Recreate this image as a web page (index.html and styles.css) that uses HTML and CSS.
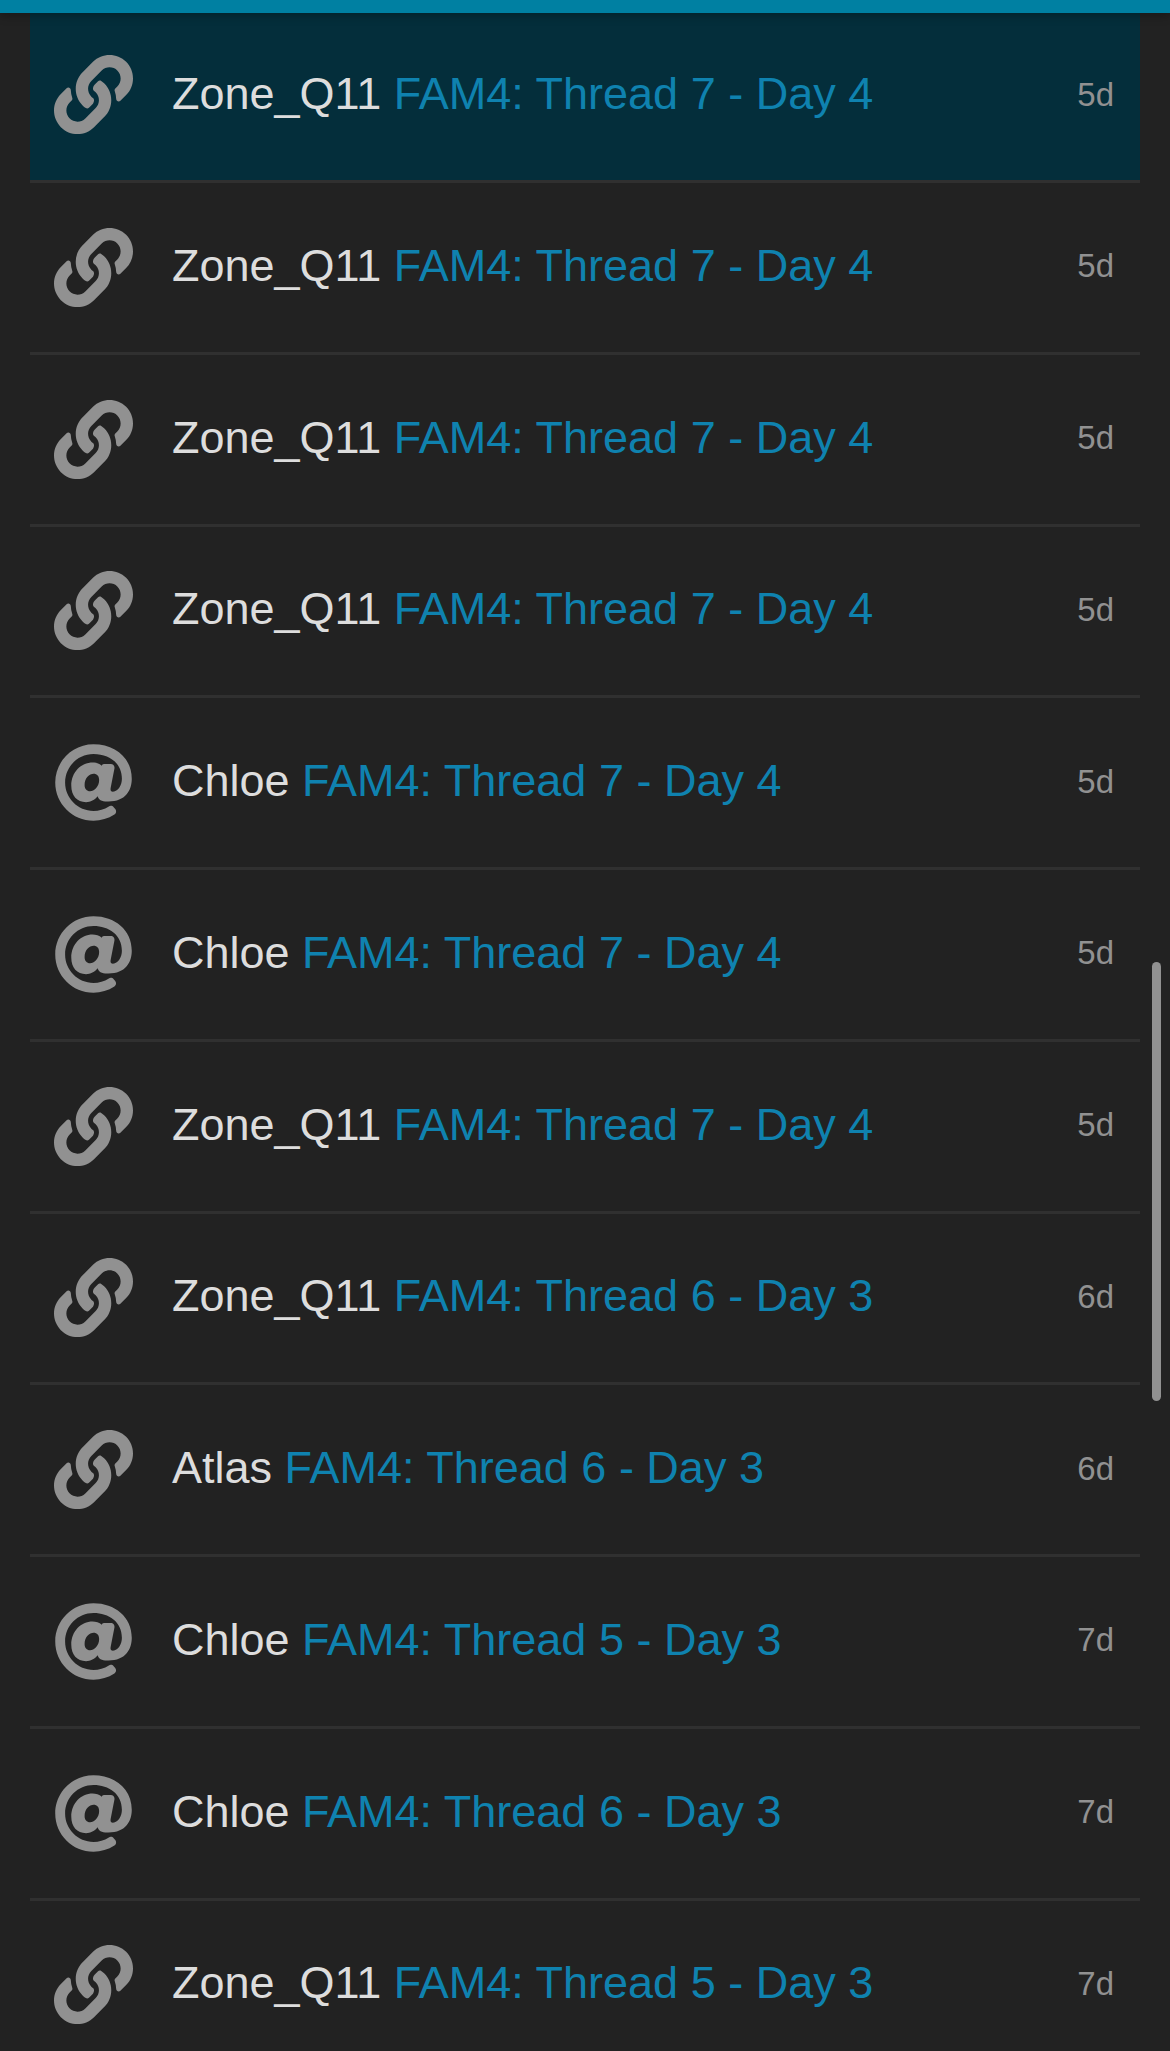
FILE: index.html
```html
<!DOCTYPE html>
<html lang="en">
<head>
<meta charset="utf-8">
<title>Notifications</title>
<link rel="stylesheet" href="styles.css">
</head>
<body>
<svg class="sprite" aria-hidden="true">
<symbol id="link" viewBox="0 0 512 512"><path d="M326.612 185.391c59.747 59.809 58.927 155.698.36 214.59-.11.12-.24.25-.36.37l-67.2 67.2c-59.27 59.27-155.699 59.262-214.96 0-59.27-59.26-59.27-155.7 0-214.96l37.106-37.106c9.84-9.84 26.786-3.3 27.294 10.606.648 17.722 3.826 35.527 9.69 52.721 1.986 5.822.567 12.262-3.783 16.612l-13.087 13.087c-28.026 28.026-28.905 73.66-1.155 101.96 28.024 28.579 74.086 28.749 102.325.51l67.2-67.19c28.191-28.191 28.073-73.757 0-101.83-3.701-3.694-7.429-6.564-10.341-8.569a16.037 16.037 0 0 1-6.947-12.606c-.396-10.567 3.348-21.456 11.698-29.806l21.054-21.055c5.521-5.521 14.182-6.199 20.584-1.731a152.482 152.482 0 0 1 20.522 17.197zM467.547 44.449c-59.261-59.262-155.69-59.27-214.96 0l-67.2 67.2c-.12.12-.25.25-.36.37-58.566 58.892-59.387 154.781.36 214.59a152.454 152.454 0 0 0 20.521 17.196c6.402 4.468 15.064 3.789 20.584-1.731l21.054-21.055c8.35-8.35 12.094-19.239 11.698-29.806a16.037 16.037 0 0 0-6.947-12.606c-2.912-2.005-6.64-4.875-10.341-8.569-28.073-28.073-28.191-73.639 0-101.83l67.2-67.19c28.239-28.239 74.3-28.069 102.325.51 27.75 28.3 26.872 73.934-1.155 101.96l-13.087 13.087c-4.35 4.35-5.769 10.79-3.783 16.612 5.864 17.194 9.042 34.999 9.69 52.721.509 13.906 17.454 20.446 27.294 10.606l37.106-37.106c59.271-59.259 59.271-155.699.001-214.959z"/></symbol>
<symbol id="at" viewBox="0 0 512 512"><path d="M256 8C118.941 8 8 118.919 8 256c0 137.059 110.919 248 248 248 48.154 0 95.342-14.14 135.408-40.223 12.005-7.815 14.625-24.288 5.552-35.372l-10.177-12.433c-7.671-9.371-21.179-11.667-31.373-5.129C325.92 429.757 291.314 440 256 440c-101.458 0-184-82.542-184-184S154.542 72 256 72c100.139 0 184 57.619 184 160 0 38.786-21.093 79.742-58.17 83.693-17.349-.454-16.91-12.857-13.476-30.024l23.433-121.11C394.653 149.75 383.308 136 368.225 136h-44.981a13.518 13.518 0 0 0-13.432 11.993l-.01.092c-14.697-17.901-40.448-21.775-59.971-21.775-74.58 0-137.831 62.234-137.831 151.46 0 65.303 36.785 105.87 96 105.87 26.984 0 57.369-15.637 74.991-38.333 9.522 34.104 40.613 34.104 70.706 34.104C462.609 379.41 504 307.798 504 232 504 95.653 394.023 8 256 8zm-21.68 304.43c-22.249 0-36.07-15.623-36.07-40.771 0-44.993 30.779-72.729 58.63-72.729 22.292 0 35.601 15.241 35.601 40.77 0 45.061-33.875 72.73-58.161 72.73z"/></symbol>
</svg>
<header class="topbar"></header>
<ul class="list">
<li class="item unread"><svg class="icon"><use href="#link"/></svg><p class="text">Zone_Q11 <a class="topic">FAM4: Thread 7 - Day 4</a></p><time class="age">5d</time></li>
<li class="item"><svg class="icon"><use href="#link"/></svg><p class="text">Zone_Q11 <a class="topic">FAM4: Thread 7 - Day 4</a></p><time class="age">5d</time></li>
<li class="item"><svg class="icon"><use href="#link"/></svg><p class="text">Zone_Q11 <a class="topic">FAM4: Thread 7 - Day 4</a></p><time class="age">5d</time></li>
<li class="item"><svg class="icon"><use href="#link"/></svg><p class="text">Zone_Q11 <a class="topic">FAM4: Thread 7 - Day 4</a></p><time class="age">5d</time></li>
<li class="item"><svg class="icon"><use href="#at"/></svg><p class="text">Chloe <a class="topic">FAM4: Thread 7 - Day 4</a></p><time class="age">5d</time></li>
<li class="item"><svg class="icon"><use href="#at"/></svg><p class="text">Chloe <a class="topic">FAM4: Thread 7 - Day 4</a></p><time class="age">5d</time></li>
<li class="item"><svg class="icon"><use href="#link"/></svg><p class="text">Zone_Q11 <a class="topic">FAM4: Thread 7 - Day 4</a></p><time class="age">5d</time></li>
<li class="item"><svg class="icon"><use href="#link"/></svg><p class="text">Zone_Q11 <a class="topic">FAM4: Thread 6 - Day 3</a></p><time class="age">6d</time></li>
<li class="item"><svg class="icon"><use href="#link"/></svg><p class="text">Atlas <a class="topic">FAM4: Thread 6 - Day 3</a></p><time class="age">6d</time></li>
<li class="item"><svg class="icon"><use href="#at"/></svg><p class="text">Chloe <a class="topic">FAM4: Thread 5 - Day 3</a></p><time class="age">7d</time></li>
<li class="item"><svg class="icon"><use href="#at"/></svg><p class="text">Chloe <a class="topic">FAM4: Thread 6 - Day 3</a></p><time class="age">7d</time></li>
<li class="item"><svg class="icon"><use href="#link"/></svg><p class="text">Zone_Q11 <a class="topic">FAM4: Thread 5 - Day 3</a></p><time class="age">7d</time></li>
</ul>
<div class="scroll-thumb"></div>
</body>
</html>
```
FILE: styles.css
```css
* { box-sizing: border-box; }

body {
  margin: 0;
  height: 2051px;
  overflow: hidden;
  background: #222;
  color: #ddd;
  font-family: "Liberation Sans", Arial, sans-serif;
}

.sprite { display: none; }

.topbar {
  position: relative;
  height: 13px;
  background: #0080a2;
  box-shadow: 0 3px 10px rgba(0, 0, 0, .28);
}

.list {
  margin: 0;
  padding: 0 30px;
  list-style: none;
}

.item {
  display: flex;
  align-items: center;
  height: 171.75px;
  padding: 0 26px 0 24px;
  border-bottom: 3px solid #303030;
}

.item.unread {
  height: 170px;
  padding-bottom: 4px;
  background: #042e3b;
}

.icon {
  flex: none;
  width: 79px;
  height: 79px;
  margin-right: 39px;
  fill: #919191;
}

.text {
  flex: 1;
  margin: 0;
  padding-bottom: 4px;
  font-size: 45px;
  line-height: 63px;
  white-space: nowrap;
}

.unread .text { padding-bottom: 2px; }

.topic { color: #0f82af; }

.age {
  padding-bottom: 2px;
  color: #919191;
  font-size: 33px;
}

.unread .age { padding-bottom: 0; }

.scroll-thumb {
  position: absolute;
  top: 962px;
  right: 9px;
  width: 9px;
  height: 439px;
  border-radius: 5px;
  background: #919191;
}
```
